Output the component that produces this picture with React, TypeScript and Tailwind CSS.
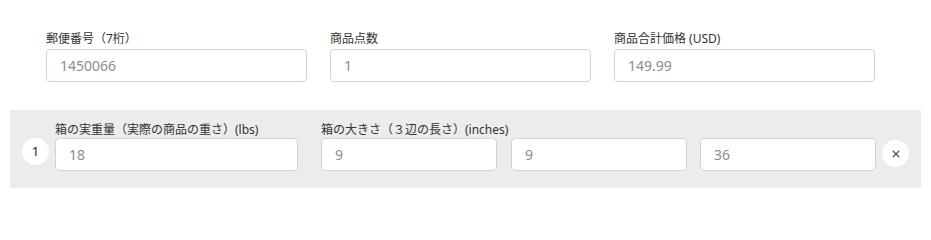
import React from 'react';

const font = { fontFamily: '"Noto Sans", "Noto Sans CJK JP", sans-serif' };

function Field({ label, value }: { label: string; value: string }) {
  return (
    <div className="flex w-[261px] shrink-0 flex-col">
      <label className="mb-[2px] whitespace-nowrap text-[12px] leading-[16px] text-[#333]">{label}</label>
      <input
        readOnly
        value={value}
        className="h-[33px] w-full min-w-0 rounded-[4px] border border-[#cfd4da] bg-white px-[13px] text-[14px] text-[#8c8c8c] outline-none"
      />
    </div>
  );
}

function Box({ value, className }: { value: string; className: string }) {
  return (
    <input
      readOnly
      value={value}
      className={`h-[33px] min-w-0 shrink-0 rounded-[4px] border border-[#cfd4da] bg-white px-[13px] text-[14px] text-[#8c8c8c] outline-none ${className}`}
    />
  );
}

export default function App() {
  return (
    <div className="h-[202px] w-[931px] bg-white" style={font}>
      {/* Order info */}
      <div className="flex gap-[23px] pl-[46px] pt-[31px]">
        <Field label="郵便番号（7桁）" value="1450066" />
        <Field label="商品点数" value="1" />
        <Field label="商品合計価格 (USD)" value="149.99" />
      </div>

      {/* Box row */}
      <div className="mx-[10px] mt-[28px] flex items-end bg-[#ececec] px-[12px] pb-[17px] pt-[12px]">
        <div className="mb-[6px] flex h-[27px] w-[27px] shrink-0 items-center justify-center rounded-full bg-white text-[13px] text-[#222]">
          1
        </div>
        <div className="ml-[6px] flex w-[243px] shrink-0 flex-col">
          <label className="whitespace-nowrap text-[12px] leading-[16px] text-[#333]">
            箱の実重量（実際の商品の重さ）(lbs)
          </label>
          <Box value="18" className="w-full" />
        </div>
        <div className="ml-[23px] flex w-[176px] shrink-0 flex-col">
          <label className="whitespace-nowrap text-[12px] leading-[16px] text-[#333]">
            箱の大きさ（３辺の長さ）(inches)
          </label>
          <Box value="9" className="w-full" />
        </div>
        <Box value="9" className="ml-[14px] w-[176px]" />
        <Box value="36" className="ml-[13px] w-[176px]" />
        <button className="mb-[4px] ml-[6px] flex h-[27px] w-[27px] shrink-0 items-center justify-center rounded-full bg-white text-[#555]">
          <svg width="8" height="8" viewBox="0 0 10 10" stroke="currentColor" strokeWidth="1.6" strokeLinecap="round">
            <path d="M1.5 1.5 L8.5 8.5 M8.5 1.5 L1.5 8.5" />
          </svg>
        </button>
      </div>
    </div>
  );
}
